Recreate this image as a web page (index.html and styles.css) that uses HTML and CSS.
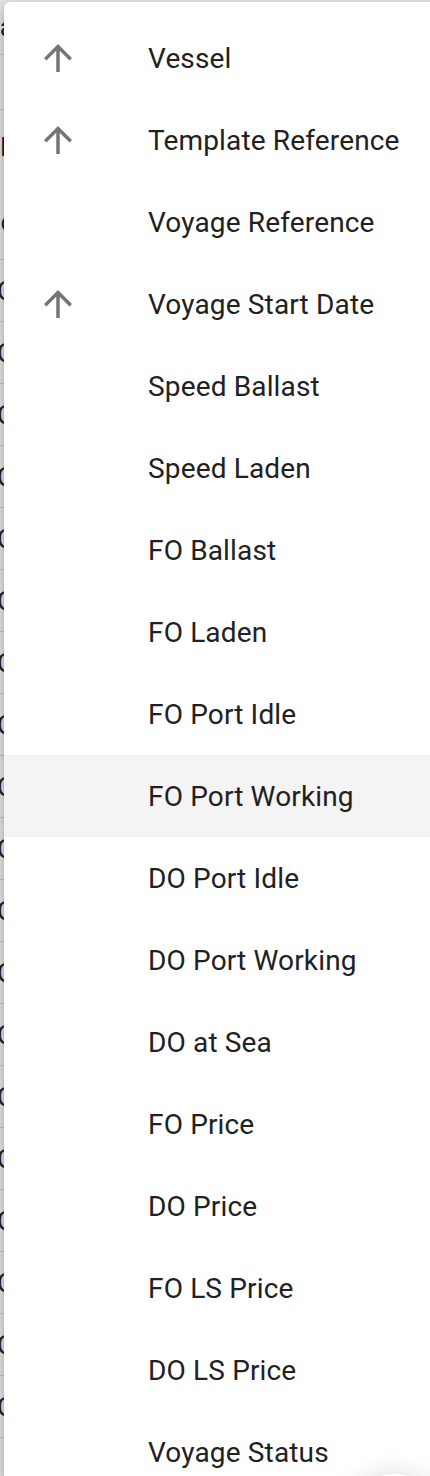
FILE: index.html
```html
<!DOCTYPE html>
<html lang="en">
<head>
  <meta charset="UTF-8" />
  <meta name="viewport" content="width=device-width, initial-scale=1.0"/>
  <title>Sort columns</title>
  <link rel="stylesheet" href="styles.css">
</head>
<body>

  <div class="page">
    <div class="row row-head"><span class="cell">a</span></div>
    <div class="row row-head"><span class="cell"></span></div>
    <div class="row row-tall"><span class="cell">L</span><span class="cell">c</span></div>
    <div class="row"><span class="cell">C</span></div>
    <div class="row"><span class="cell">C</span></div>
    <div class="row"><span class="cell">C</span></div>
    <div class="row"><span class="cell">C</span></div>
    <div class="row"><span class="cell">C</span></div>
    <div class="row"><span class="cell">C</span></div>
    <div class="row"><span class="cell">C</span></div>
    <div class="row"><span class="cell">C</span></div>
    <div class="row"><span class="cell">C</span></div>
    <div class="row"><span class="cell">C</span></div>
    <div class="row"><span class="cell">C</span></div>
    <div class="row"><span class="cell">C</span></div>
    <div class="row"><span class="cell">C</span></div>
    <div class="row"><span class="cell">C</span></div>
    <div class="row"><span class="cell">C</span></div>
    <div class="row"><span class="cell">C</span></div>
    <div class="row"><span class="cell">C</span></div>
    <div class="row"><span class="cell">C</span></div>
    <div class="row"><span class="cell">C</span></div>
  </div>

  <ul class="menu">
    <li class="item"><span class="icon"><svg viewBox="0 0 24 24"><path d="M4 12l1.41 1.41L11 7.83V20h2V7.83l5.58 5.59L20 12l-8-8-8 8z"/></svg></span><span class="label">Vessel</span></li>
    <li class="item"><span class="icon"><svg viewBox="0 0 24 24"><path d="M4 12l1.41 1.41L11 7.83V20h2V7.83l5.58 5.59L20 12l-8-8-8 8z"/></svg></span><span class="label">Template Reference</span></li>
    <li class="item"><span class="icon"></span><span class="label">Voyage Reference</span></li>
    <li class="item"><span class="icon"><svg viewBox="0 0 24 24"><path d="M4 12l1.41 1.41L11 7.83V20h2V7.83l5.58 5.59L20 12l-8-8-8 8z"/></svg></span><span class="label">Voyage Start Date</span></li>
    <li class="item"><span class="icon"></span><span class="label">Speed Ballast</span></li>
    <li class="item"><span class="icon"></span><span class="label">Speed Laden</span></li>
    <li class="item"><span class="icon"></span><span class="label">FO Ballast</span></li>
    <li class="item"><span class="icon"></span><span class="label">FO Laden</span></li>
    <li class="item"><span class="icon"></span><span class="label">FO Port Idle</span></li>
    <li class="item active"><span class="icon"></span><span class="label">FO Port Working</span></li>
    <li class="item"><span class="icon"></span><span class="label">DO Port Idle</span></li>
    <li class="item"><span class="icon"></span><span class="label">DO Port Working</span></li>
    <li class="item"><span class="icon"></span><span class="label">DO at Sea</span></li>
    <li class="item"><span class="icon"></span><span class="label">FO Price</span></li>
    <li class="item"><span class="icon"></span><span class="label">DO Price</span></li>
    <li class="item"><span class="icon"></span><span class="label">FO LS Price</span></li>
    <li class="item"><span class="icon"></span><span class="label">DO LS Price</span></li>
    <li class="item"><span class="icon"></span><span class="label">Voyage Status</span></li>
  </ul>

  <div class="fab"></div>

</body>
</html>
```

FILE: styles.css
```css
* {
  box-sizing: border-box;
}

html, body {
  height: 100%;
}

body {
  margin: 0;
  font-family: Roboto, 'Noto Sans', sans-serif;
  background: #e4e4e4;
  color: #212121;
  overflow: hidden;
  position: relative;
}

/* page behind the menu, only a sliver shows */
.page {
  width: 100%;
  height: 100%;
  overflow: hidden;
}

.row {
  height: 62px;
  border-bottom: 1px solid #c4c4c4;
  display: flex;
  flex-direction: column;
  justify-content: center;
}

.row-head {
  height: 55px;
}

.row-tall {
  height: 150px;
  justify-content: space-around;
}

.cell {
  display: block;
  width: 4px;
  overflow: hidden;
  white-space: nowrap;
  direction: rtl;
  font-size: 26px;
  line-height: 30px;
  color: #222;
}

.cell:first-letter {
  margin-right: -10px;
}

/* sort menu */
.menu {
  position: absolute;
  top: 2px;
  bottom: 0;
  left: 4px;
  width: 440px;
  margin: 0;
  padding: 15px 0 0;
  list-style: none;
  background: #ffffff;
  border-radius: 6px 6px 0 0;
  overflow: hidden;
  box-shadow: 0 5px 5px -3px rgba(0, 0, 0, 0.2),
              0 8px 10px 1px rgba(0, 0, 0, 0.14),
              0 3px 14px 2px rgba(0, 0, 0, 0.12);
}

.item {
  height: 82px;
  flex-shrink: 0;
  display: flex;
  align-items: center;
  padding-left: 33px;
}

.item.active {
  background: #f4f4f4;
}

.icon {
  width: 42px;
  height: 42px;
  flex-shrink: 0;
  margin-right: 69px;
}

.icon svg {
  display: block;
  width: 42px;
  height: 42px;
  fill: #757575;
}

.label {
  font-size: 28px;
  letter-spacing: 0.15px;
  white-space: nowrap;
}

.fab {
  position: absolute;
  right: -20px;
  bottom: -110px;
  width: 112px;
  height: 112px;
  border-radius: 50%;
  background: #ffffff;
  box-shadow: 0 6px 10px rgba(0, 0, 0, 0.16),
              0 1px 28px rgba(0, 0, 0, 0.14);
}
```
